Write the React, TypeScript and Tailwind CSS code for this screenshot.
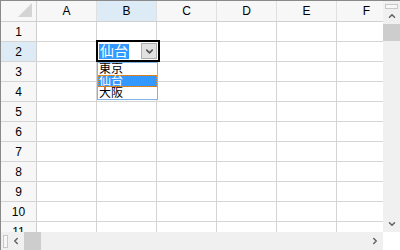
import { ChevronDown, ChevronUp, ChevronLeft, ChevronRight } from "lucide-react";

const cols = ["A", "B", "C", "D", "E", "F"];
const rows = [1, 2, 3, 4, 5, 6, 7, 8, 9, 10, 11];

export default function App() {
  return (
    <div
      className="w-[400px] h-[250px] bg-white border-t border-l border-[#8a8a8a] flex flex-col overflow-hidden"
      style={{ fontFamily: '"Liberation Sans", "Noto Sans CJK JP", sans-serif' }}
    >
      <div className="flex h-[231px]">
        <div className="relative flex-1 overflow-hidden">
          {/* header row */}
          <div className="flex h-[21px] border-b border-[#d0d0d0]">
            <div className="relative w-[36px] shrink-0 bg-[#f7f7f7] border-r border-[#d0d0d0]">
              <div className="absolute right-[4px] bottom-[4px] w-0 h-0 border-l-[14px] border-l-transparent border-b-[14px] border-b-[#d4d4d4]" />
            </div>
            {cols.map((c) => (
              <div
                key={c}
                className={
                  "w-[60px] shrink-0 flex items-center justify-center text-[12px] text-black border-r border-[#e0e0e0] " +
                  (c === "B" ? "bg-[#dcebf6]" : "bg-[#f7f7f7]")
                }
              >
                {c}
              </div>
            ))}
          </div>
          {rows.map((r) => (
            <div key={r} className="flex h-[20px] border-b border-[#d4d4d4]">
              <div
                className={
                  "w-[36px] shrink-0 flex items-center justify-center text-[12px] text-black border-r border-[#d0d0d0] " +
                  (r === 2 ? "bg-[#dcebf6]" : "bg-[#f7f7f7]")
                }
              >
                {r}
              </div>
              {cols.map((c) => (
                <div key={c} className="w-[60px] shrink-0 border-r border-[#d4d4d4]" />
              ))}
            </div>
          ))}

          {/* combobox editor */}
          <div className="absolute left-[95px] top-[39px] w-[64px] h-[22px] border-2 border-black bg-white flex items-center">
            <span className="ml-[1px] bg-[#3399ff] text-white text-[14px] leading-[15px] px-[1px]">仙台</span>
            <div className="ml-auto mr-[1px] w-[16px] h-[16px] bg-[#e1e1e1] border border-[#adadad] flex items-center justify-center">
              <ChevronDown size={11} strokeWidth={3.5} className="text-[#555]" />
            </div>
          </div>

          {/* dropdown list */}
          <div className="absolute left-[96px] top-[61px] w-[61px] h-[38px] border border-[#7eb4ea] bg-white flex flex-col text-[12px] leading-[12px] text-black">
            <div className="h-[12px] pl-[1px] overflow-hidden">東京</div>
            <div className="h-[12px] pl-[1px] overflow-hidden bg-[#3399ff] text-white outline-1 outline-dotted outline-[#e08a2c] -outline-offset-1">仙台</div>
            <div className="h-[12px] pl-[1px] overflow-hidden">大阪</div>
          </div>
        </div>

        {/* vertical scrollbar */}
        <div className="w-[17px] shrink-0 bg-[#f0f0f0] flex flex-col items-center">
          <div className="mt-[3px] w-[13px] h-[5px] bg-[#f7f7f7] border border-[#c8c8c8]" />
          <div className="h-[14px] flex items-center justify-center">
            <ChevronUp size={10} strokeWidth={3.5} className="text-[#606060]" />
          </div>
          <div className="mt-[1px] w-[17px] h-[17px] bg-[#cdcdcd]" />
          <div className="mt-auto h-[17px] flex items-center justify-center">
            <ChevronDown size={10} strokeWidth={3.5} className="text-[#606060]" />
          </div>
        </div>
      </div>

      {/* horizontal scrollbar */}
      <div className="flex h-[18px]">
        <div className="flex-1 bg-[#f0f0f0] flex items-center">
          <div className="ml-[2px] w-[5px] h-[13px] bg-[#f7f7f7] border border-[#c8c8c8]" />
          <div className="w-[16px] flex items-center justify-center">
            <ChevronLeft size={10} strokeWidth={3.5} className="text-[#606060]" />
          </div>
          <div className="w-[17px] h-[18px] bg-[#cdcdcd]" />
          <div className="ml-auto w-[17px] flex items-center justify-center">
            <ChevronRight size={10} strokeWidth={3.5} className="text-[#606060]" />
          </div>
        </div>
        <div className="w-[17px] bg-white" />
      </div>
    </div>
  );
}
